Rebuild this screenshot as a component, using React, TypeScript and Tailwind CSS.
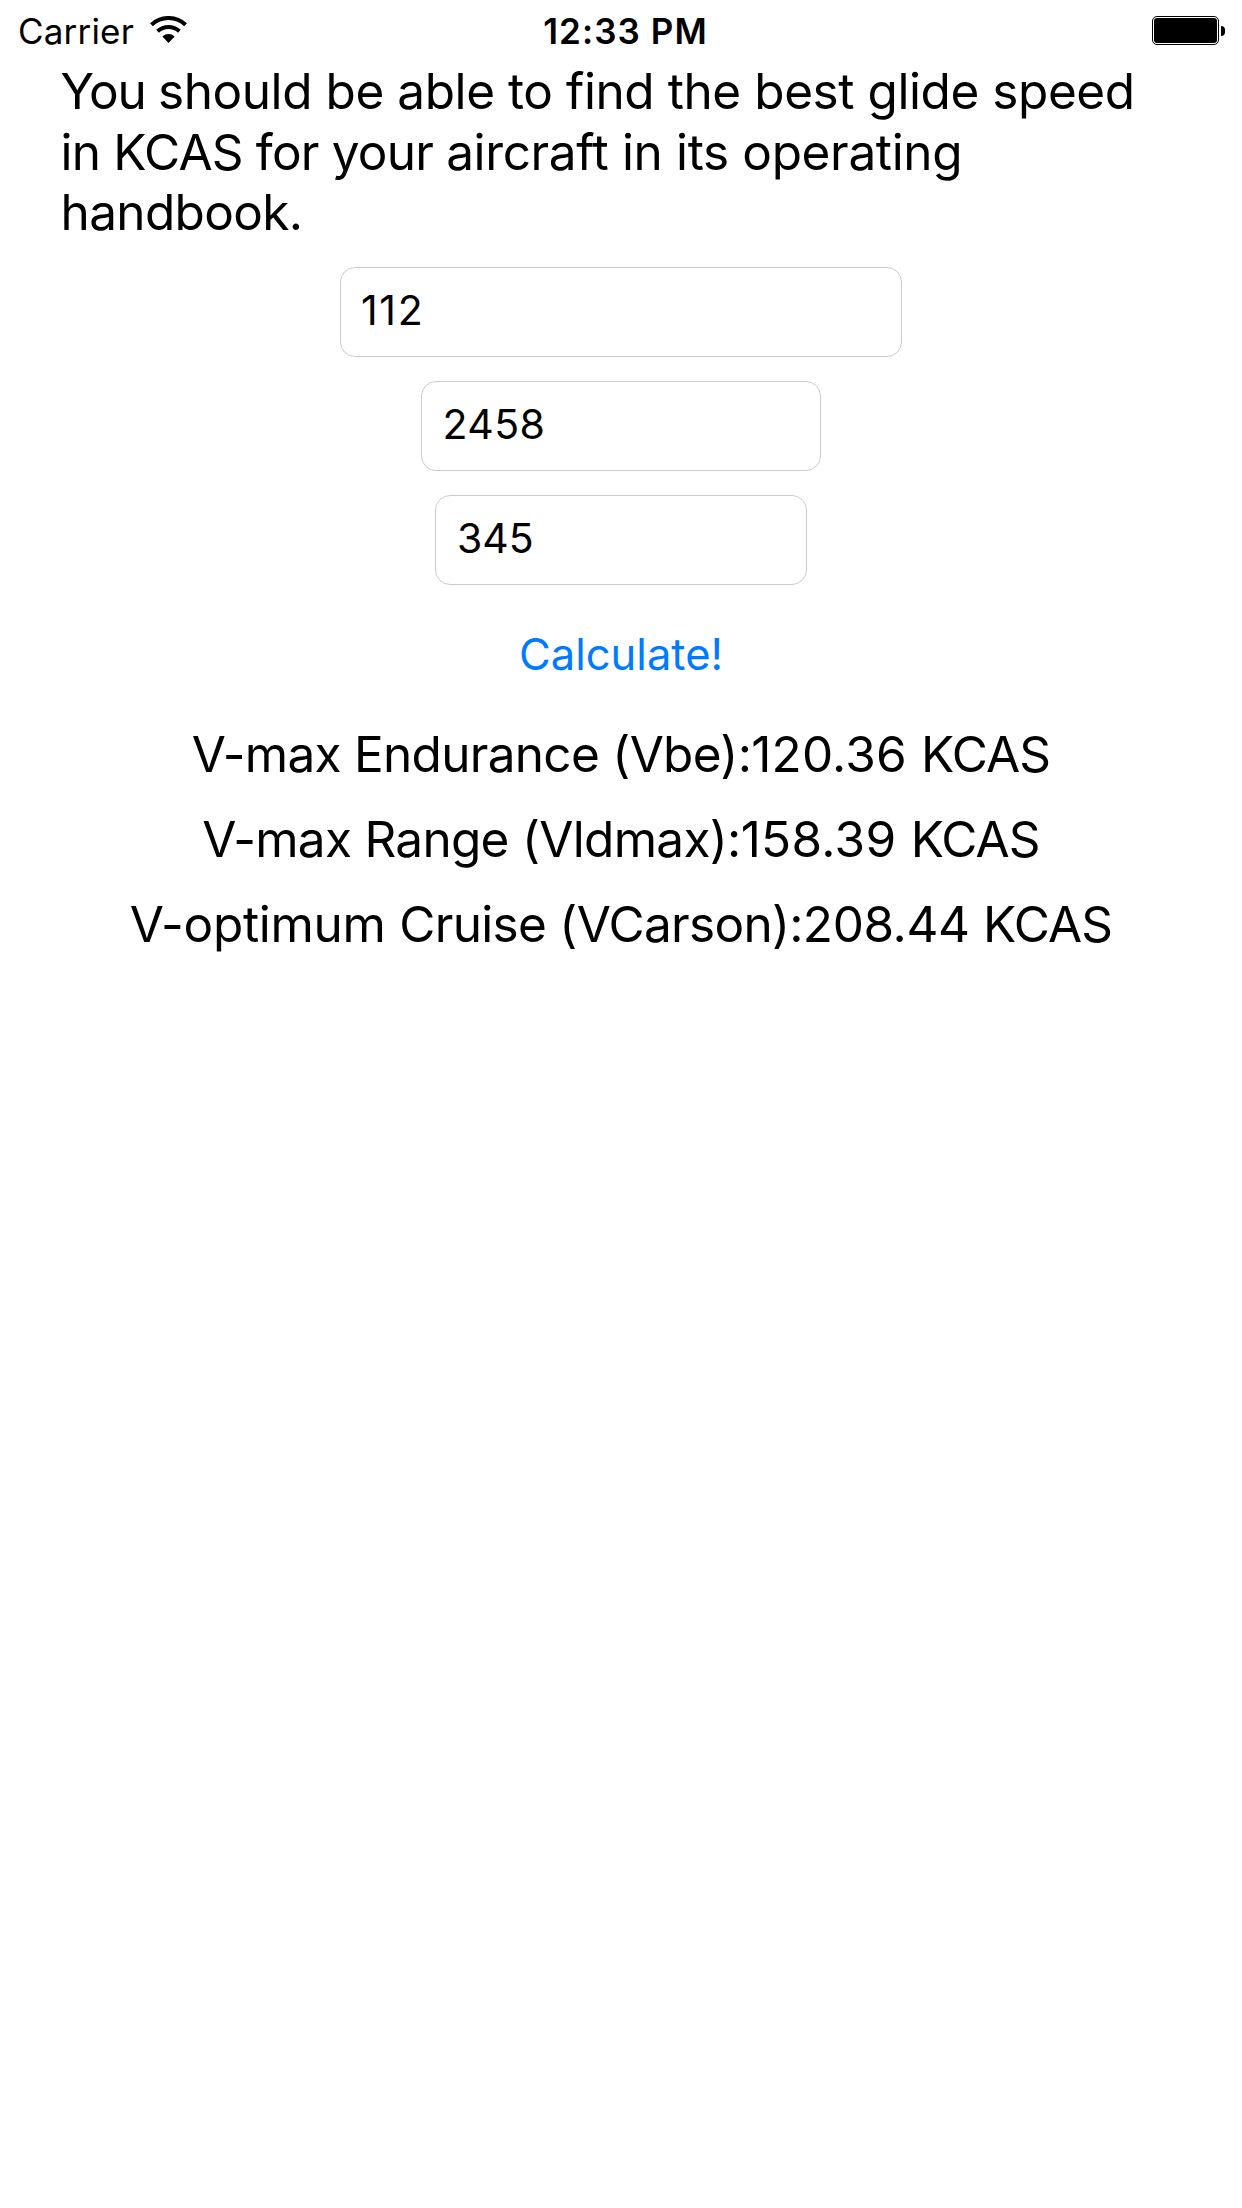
function WifiIcon() {
  return (
    <svg width="37" height="27" viewBox="0 0 37 27" fill="none" aria-hidden="true">
      <path d="M1.45 8.7A25 25 0 0 1 35.55 8.7" stroke="#000" strokeWidth="4" />
      <path d="M7.6 15.3A16 16 0 0 1 29.4 15.3" stroke="#000" strokeWidth="4" />
      <path d="M18.5 27L12.36 20.4A9 9 0 0 1 24.64 20.4Z" fill="#000" />
    </svg>
  );
}

function BatteryIcon() {
  return (
    <div className="flex items-center gap-[2px]">
      <div className="h-[29px] w-[67px] rounded-[5px] border border-black p-px">
        <div className="h-full rounded-[3px] bg-black" />
      </div>
      <div className="mt-px h-[10px] w-1 rounded-r-full bg-black" />
    </div>
  );
}

function StatusBar() {
  return (
    <header className="grid h-[60px] grid-cols-3 pr-[17px] pl-[18px] text-[35px] leading-[62px]">
      <div className="flex items-start">
        <span className="tracking-[0.19px]">Carrier</span>
        <span className="mt-4 ml-4">
          <WifiIcon />
        </span>
      </div>
      <div className="pl-2 text-center font-semibold tracking-[1.08px] whitespace-nowrap">12:33 PM</div>
      <div className="flex items-start justify-end pt-4">
        <BatteryIcon />
      </div>
    </header>
  );
}

const fieldClass =
  "h-[90px] rounded-[15px] border border-[#cbcbcb] bg-white pb-1 text-[41px] leading-[50px] text-black outline-none";

const results = [
  { name: "V-max ", detail: "Endurance (Vbe):", value: "120.36 ", nameClass: "tracking-[-0.73px]", valueClass: "tracking-[0.2px]" },
  { name: "V-max ", detail: "Range (Vldmax):", value: "158.39 ", nameClass: "tracking-[-0.73px]", valueClass: "tracking-[0.3px]" },
  { name: "V-optimum ", detail: "Cruise (VCarson):", value: "208.44 ", nameClass: "tracking-[-0.3px]", valueClass: "tracking-[-0.4px]" },
];

export default function App() {
  return (
    <div className="min-h-[2208px] w-full bg-white font-['Inter',sans-serif] text-black">
      <StatusBar />
      <main className="flex flex-col items-center pt-px">
        <p className="w-full pl-[60.5px] text-[49.5px] leading-[60.67px] whitespace-nowrap">
          <span className="block tracking-[-0.43px]">
            <span className="tracking-[-1.3px]">You </span>should be able to find the best glide speed
          </span>
          <span className="block tracking-[-0.36px]">
            <span className="tracking-[-0.8px]">in KCAS for your </span>aircraft in its operating
          </span>
          <span className="block tracking-[-0.64px]">handbook.</span>
        </p>
        <form className="mt-6 flex flex-col items-center gap-6">
          <input className={`${fieldClass} w-[562px] pl-[20px] tracking-[1.67px]`} defaultValue="112" />
          <input className={`${fieldClass} w-[400px] pl-[20.5px] tracking-[0.4px]`} defaultValue="2458" />
          <input className={`${fieldClass} w-[372px] pl-[21px] tracking-normal`} defaultValue="345" />
        </form>
        <button type="button" className="mt-[42px] text-[43.5px] leading-[54px] tracking-[0.02px] text-[#007aff]">
          Calculate!
        </button>
        <div className="mt-[43px] flex flex-col items-center gap-6 text-[49.5px] leading-[61px] whitespace-nowrap">
          {results.map((r) => (
            <p key={r.detail}>
              <span className={r.nameClass}>{r.name}</span>
              <span className="tracking-[-0.7px]">{r.detail}</span>
              <span className={r.valueClass}>{r.value}</span>
              <span className="tracking-[-0.9px]">KCAS</span>
            </p>
          ))}
        </div>
      </main>
    </div>
  );
}
